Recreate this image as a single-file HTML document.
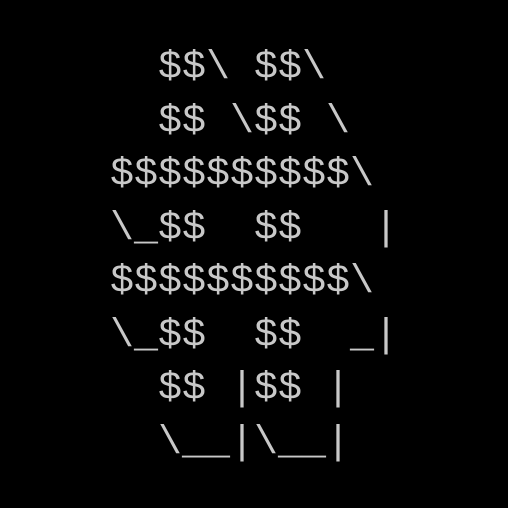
<!DOCTYPE html>
<html><head><style>
html,body{margin:0;padding:0;background:#000;width:508px;height:508px;overflow:hidden}
pre{position:absolute;left:110px;top:42px;margin:0;font-family:"Liberation Mono","DejaVu Sans Mono",monospace;font-size:40px;line-height:53.5px;color:#c8c8c8}
</style></head><body>
<pre>  $$\ $$\
  $$ \$$ \
$$$$$$$$$$\
\_$$  $$   |
$$$$$$$$$$\
\_$$  $$  _|
  $$ |$$ |
  \__|\__|</pre>
</body></html>
